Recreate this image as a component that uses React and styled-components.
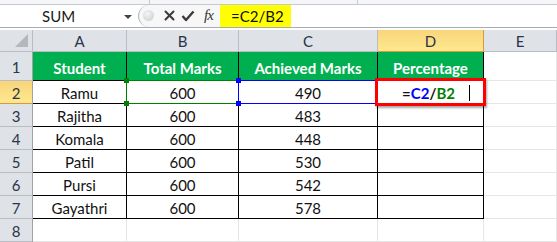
import React from 'react';
import styled, { createGlobalStyle } from 'styled-components';

const GlobalStyle = createGlobalStyle`
  html, body {
    margin: 0;
    padding: 0;
    background: #ffffff;
  }
  * {
    box-sizing: border-box;
  }
`;

const Window = styled.div`
  width: 557px;
  height: 242px;
  overflow: hidden;
  display: flex;
  flex-direction: column;
  font-family: Lato, "Open Sans", sans-serif;
  background: #ffffff;
`;

const TopStrip = styled.div`
  height: 5px;
  display: flex;
  background: #f4f5f7;
  border-bottom: 1px solid #c6c9ce;
`;

const StripPart = styled.div`
  width: ${p => p.w}px;
  border-right: 1px solid #c6c9ce;
`;

const FormulaBar = styled.div`
  height: 24px;
  display: flex;
  align-items: stretch;
  background: #ffffff;
  border-bottom: 1px solid #a8acb2;
`;

const NameBox = styled.div`
  width: 138px;
  display: flex;
  align-items: center;
  padding-left: 42px;
  font-size: 15px;
  color: #1a1a1a;
  position: relative;
`;

const DropArrow = styled.span`
  position: absolute;
  left: 124px;
  top: 10px;
  width: 0;
  height: 0;
  border-left: 4px solid transparent;
  border-right: 4px solid transparent;
  border-top: 4px solid #444;
`;

const ButtonStrip = styled.div`
  width: 82px;
  display: flex;
  align-items: center;
  padding-left: 4px;
  background: #f7f7f8;
  border-left: 1px solid #b4b8be;
  border-radius: 12px 0 0 12px;
`;

const Knob = styled.span`
  width: 11px;
  height: 11px;
  border-radius: 50%;
  background: radial-gradient(circle at 40% 35%, #f4f4f4, #c8cacd);
  margin-right: 10px;
`;

const IconSlot = styled.span`
  display: flex;
  margin-right: ${p => p.gap}px;
`;

const Fx = styled.span`
  font-family: "Liberation Serif", serif;
  font-style: italic;
  font-size: 15px;
  color: #333;
  letter-spacing: -1px;
`;

const FormulaText = styled.div`
  width: 71px;
  background: #ffff00;
  display: flex;
  align-items: center;
  padding-left: 11px;
  font-size: 15px;
  color: #111;
`;

const Gap = styled.div`
  height: 2px;
  background: #ffffff;
`;

const Sheet = styled.div`
  display: grid;
  grid-template-columns: 33px 94px 112px 139px 106px 73px;
  grid-template-rows: 22px 29px repeat(6, 23px) 23px;
`;

const Corner = styled.div`
  background: #dfe2e7;
  border-right: 1px solid #b9bdc3;
  border-bottom: 1px solid #b9bdc3;
  position: relative;
  &::after {
    content: '';
    position: absolute;
    right: 4px;
    bottom: 4px;
    border-left: 13px solid transparent;
    border-bottom: 13px solid #b4b7bb;
  }
`;

const ColHead = styled.div`
  display: flex;
  align-items: center;
  justify-content: center;
  font-size: 15px;
  color: #283548;
  background: ${p => (p.active ? 'linear-gradient(#f9d57a, #fde88f)' : '#dfe2e7')};
  border-right: 1px solid ${p => (p.active ? '#d89a3a' : '#b9bdc3')};
  border-bottom: 1px solid ${p => (p.active ? '#d89a3a' : '#b9bdc3')};
`;

const RowHead = styled.div`
  display: flex;
  align-items: center;
  justify-content: center;
  padding-top: 2px;
  font-size: 15px;
  color: #283548;
  background: ${p => (p.active ? 'linear-gradient(#f9d57a, #fde88f)' : '#dfe2e7')};
  border-right: 1px solid #9ea3aa;
  border-bottom: 1px solid ${p => (p.active ? '#d89a3a' : '#b9bdc3')};
`;

const Cell = styled.div`
  position: relative;
  display: flex;
  align-items: center;
  justify-content: center;
  padding-top: ${p => (p.head ? '4px' : '2px')};
  font-size: 15px;
  font-weight: ${p => (p.head ? 700 : 400)};
  color: ${p => (p.head ? '#ffffff' : '#111111')};
  background: ${p => (p.head ? '#00b050' : '#ffffff')};
  border-right: 1px solid ${p => (p.inTable ? '#000000' : '#e6e6e6')};
  border-bottom: 1px solid ${p => (p.inTable ? '#000000' : '#e6e6e6')};
`;

const RefBox = styled.div`
  position: absolute;
  left: -1px;
  top: -1px;
  right: -1px;
  bottom: -1px;
  border: 1px solid ${p => p.color};
  pointer-events: none;
  z-index: 1;
`;

const Handle = styled.span`
  position: absolute;
  width: 5px;
  height: 5px;
  background: ${p => p.color};
  ${p => (p.top ? 'top: -3px;' : 'bottom: -3px;')}
  ${p => (p.left ? 'left: -3px;' : 'right: -3px;')}
`;

const ActiveBox = styled.div`
  position: absolute;
  left: -3px;
  top: -3px;
  right: -3px;
  bottom: -3px;
  border: 3px solid #ff0000;
  box-shadow: 1px 2px 2px rgba(0, 0, 0, 0.35);
  z-index: 2;
`;

const FormulaEdit = styled.span`
  font-weight: 700;
  color: #111;
  margin-left: -4px;
`;

const Ref = styled.span`
  color: ${p => p.color};
`;

const Caret = styled.span`
  position: absolute;
  left: 91px;
  top: 4px;
  width: 1px;
  height: 16px;
  background: #000;
`;

const columns = ['A', 'B', 'C', 'D', 'E'];

const rows = [
  ['Ramu', '600', '490'],
  ['Rajitha', '600', '483'],
  ['Komala', '600', '448'],
  ['Patil', '600', '530'],
  ['Pursi', '600', '542'],
  ['Gayathri', '600', '578'],
];

const CloseIcon = () => (
  <svg width="11" height="11" viewBox="0 0 11 11">
    <path d="M1.5 1.5 L9.5 9.5 M9.5 1.5 L1.5 9.5" stroke="#3a3a3a" strokeWidth="2" strokeLinecap="round" />
  </svg>
);

const CheckIcon = () => (
  <svg width="14" height="12" viewBox="0 0 14 12">
    <path d="M1.5 6 L5 10 L12.5 1.5" stroke="#3a3a3a" strokeWidth="2.4" fill="none" strokeLinejoin="round" />
  </svg>
);

export default function App() {
  return (
    <Window>
      <GlobalStyle />
      <TopStrip>
        <StripPart w={150} />
        <StripPart w={208} />
      </TopStrip>
      <FormulaBar>
        <NameBox>
          SUM
          <DropArrow />
        </NameBox>
        <ButtonStrip>
          <Knob />
          <IconSlot gap={6}><CloseIcon /></IconSlot>
          <IconSlot gap={9}><CheckIcon /></IconSlot>
          <Fx>fx</Fx>
        </ButtonStrip>
        <FormulaText>=C2/B2</FormulaText>
      </FormulaBar>
      <Gap />
      <Sheet>
        <Corner />
        {columns.map(c => (
          <ColHead key={c} active={c === 'D'}>{c}</ColHead>
        ))}

        <RowHead>1</RowHead>
        <Cell head inTable>Student</Cell>
        <Cell head inTable>Total Marks</Cell>
        <Cell head inTable>Achieved Marks</Cell>
        <Cell head inTable>Percentage</Cell>
        <Cell />

        {rows.map((r, i) => (
          <React.Fragment key={r[0]}>
            <RowHead active={i === 0}>{i + 2}</RowHead>
            <Cell inTable>{r[0]}</Cell>
            <Cell inTable>
              {r[1]}
              {i === 0 && (
                <RefBox color="#008000">
                  <Handle color="#008000" top left />
                  <Handle color="#008000" left />
                </RefBox>
              )}
            </Cell>
            <Cell inTable>
              {r[2]}
              {i === 0 && (
                <RefBox color="#0000ff">
                  <Handle color="#0000ff" top left />
                  <Handle color="#0000ff" left />
                </RefBox>
              )}
            </Cell>
            <Cell inTable>
              {i === 0 && (
                <>
                  <FormulaEdit>
                    =<Ref color="#0000ff">C2</Ref>/<Ref color="#008000">B2</Ref>
                  </FormulaEdit>
                  <Caret />
                  <ActiveBox />
                </>
              )}
            </Cell>
            <Cell />
          </React.Fragment>
        ))}

        <RowHead>8</RowHead>
        <Cell />
        <Cell />
        <Cell />
        <Cell />
        <Cell />
      </Sheet>
    </Window>
  );
}
